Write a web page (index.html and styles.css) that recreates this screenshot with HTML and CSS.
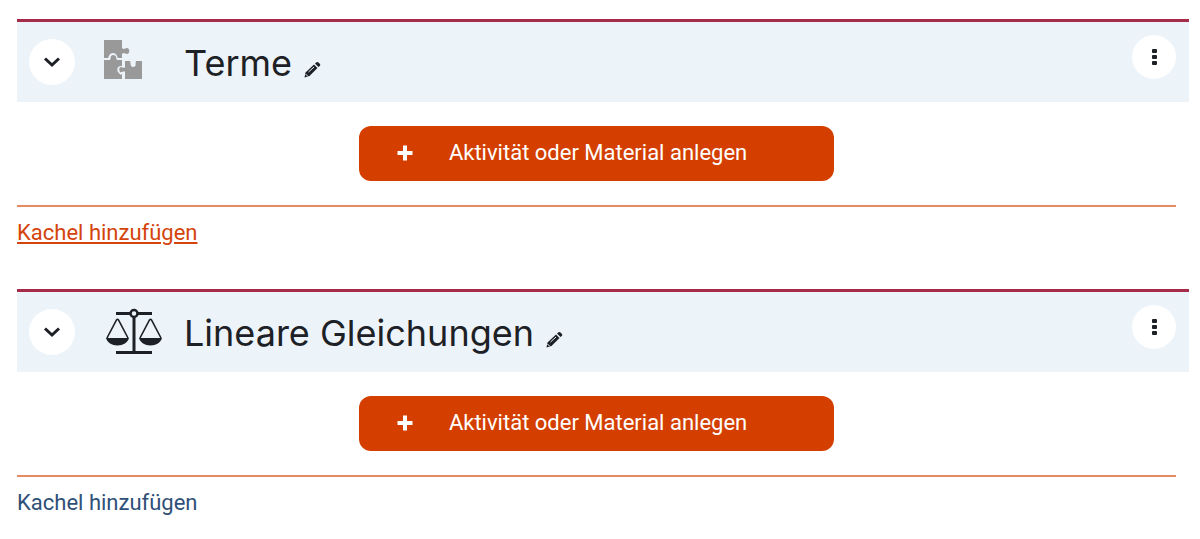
FILE: index.html
```
<!DOCTYPE html>
<html lang="de">
<head>
  <meta charset="UTF-8">
  <meta name="viewport" content="width=device-width, initial-scale=1.0">
  <title>Kurs bearbeiten</title>
  <link rel="stylesheet" href="styles.css">
</head>
<body>
  <main class="course">
    <section class="tile">
      <header class="tile-header">
        <button type="button" class="round-button" aria-label="Terme einklappen">
          <svg class="chevron" viewBox="0 0 18 12"><path d="M2 2.5 L9 9 L16 2.5" /></svg>
        </button>
        <svg class="tile-icon" viewBox="0 0 58 48" aria-hidden="true">
          <g fill="#999">
            <path d="M0 2 H18 V10 C20 12 21 10 23 10 C26 10 26 16 23 16 C21 16 20 14 18 16 V20 H14 C13 19 13 15 9 15 C5 15 5 19 4 20 H0 Z" />
            <path d="M0 22 H6 C7 21 6 17 9 17 C13 17 12 21 13 22 H18 V28 C13 27 12 33 15 35 C16 37 17 37 18 36 V41 H0 Z" />
            <path d="M21 23 H26 C27 25 26 29 29 29 C33 29 31 25 32 23 H38 V41 H21 V34 C20 32 18 35 16 34 C15 32 15 29 17 29 C19 29 20 31 21 29 Z" />
          </g>
        </svg>
        <h2 class="tile-title">Terme</h2>
        <button type="button" class="edit-button" aria-label="Titel bearbeiten">
          <svg viewBox="0 0 17 17"><path d="M0.5 16.5 L1.5 11.5 L10 3.5 L13.5 7 L5.5 15 Z M11 2.5 L12.5 1.2 Q13.5 0.5 14.5 1.5 L16 3 Q16.6 4 16 4.8 L14.5 6 Z" /><path class="pencil-light" d="M1.5 13 L4 15.5 M4.5 11 L10 6" /></svg>
        </button>
        <button type="button" class="round-button menu-button" aria-label="Aktionen">
          <svg class="dots" viewBox="0 0 5 16"><rect x="0" y="0" width="5" height="4" rx="1" /><rect x="0" y="6" width="5" height="4" rx="1" /><rect x="0" y="12" width="5" height="4" rx="1" /></svg>
        </button>
      </header>
      <div class="tile-body">
        <button type="button" class="add-activity">
          <svg class="plus" viewBox="0 0 16 16"><path d="M8 0.5 V15.5 M0.5 8 H15.5" /></svg>
          Aktivität oder Material anlegen
        </button>
        <div class="add-tile">
          <a href="#" class="add-link active">Kachel hinzufügen</a>
        </div>
      </div>
    </section>

    <section class="tile">
      <header class="tile-header">
        <button type="button" class="round-button" aria-label="Lineare Gleichungen einklappen">
          <svg class="chevron" viewBox="0 0 18 12"><path d="M2 2.5 L9 9 L16 2.5" /></svg>
        </button>
        <svg class="tile-icon" viewBox="0 0 58 48" aria-hidden="true">
          <g fill="none" stroke="#1d2125">
            <path stroke-width="3" d="M12 5.5 H48 M12 44.5 H48 M30 8 V44" />
            <path stroke-width="1.6" d="M3 30 L12.5 12 Q13.5 10.5 14.5 12 L24 30 M36 30 L45.5 12 Q46.5 10.5 47.5 12 L57 30" />
          </g>
          <path fill="#1d2125" d="M2 30 H25 C24 34.5 19 37.5 13.5 37.5 C8 37.5 3 34.5 2 30 Z M35 30 H58 C57 34.5 52 37.5 46.5 37.5 C41 37.5 36 34.5 35 30 Z" />
          <circle cx="30" cy="5.5" r="3.5" fill="#ecf3f9" stroke="#1d2125" stroke-width="2.5" />
        </svg>
        <h2 class="tile-title">Lineare Gleichungen</h2>
        <button type="button" class="edit-button" aria-label="Titel bearbeiten">
          <svg viewBox="0 0 17 17"><path d="M0.5 16.5 L1.5 11.5 L10 3.5 L13.5 7 L5.5 15 Z M11 2.5 L12.5 1.2 Q13.5 0.5 14.5 1.5 L16 3 Q16.6 4 16 4.8 L14.5 6 Z" /><path class="pencil-light" d="M1.5 13 L4 15.5 M4.5 11 L10 6" /></svg>
        </button>
        <button type="button" class="round-button menu-button" aria-label="Aktionen">
          <svg class="dots" viewBox="0 0 5 16"><rect x="0" y="0" width="5" height="4" rx="1" /><rect x="0" y="6" width="5" height="4" rx="1" /><rect x="0" y="12" width="5" height="4" rx="1" /></svg>
        </button>
      </header>
      <div class="tile-body">
        <button type="button" class="add-activity">
          <svg class="plus" viewBox="0 0 16 16"><path d="M8 0.5 V15.5 M0.5 8 H15.5" /></svg>
          Aktivität oder Material anlegen
        </button>
        <div class="add-tile">
          <a href="#" class="add-link">Kachel hinzufügen</a>
        </div>
      </div>
    </section>
  </main>
</body>
</html>
```
FILE: styles.css
```
* {
  box-sizing: border-box;
}
body {
  margin: 0;
  background-color: #fff;
  color: #1d2125;
  font-family: Roboto, sans-serif;
  font-size: 22px;
  line-height: 30px;
}
button {
  border: none;
  padding: 0;
  font: inherit;
  color: inherit;
  cursor: pointer;
}
svg {
  display: block;
}
.course {
  display: flex;
  flex-direction: column;
  gap: 41px;
  padding: 19px 11px 0 17px;
}
.tile-header {
  display: flex;
  align-items: center;
  height: 83px;
  padding: 0 13px 0 12px;
  border-top: 3px solid #a42c48;
  background-color: #ecf3f9;
}
.round-button {
  display: flex;
  align-items: center;
  justify-content: center;
  flex-shrink: 0;
  width: 46px;
  height: 46px;
  border-radius: 50%;
  background-color: #fff;
}
.chevron {
  width: 18px;
  height: 12px;
  fill: none;
  stroke: #1d2125;
  stroke-width: 3;
}
.tile-icon {
  flex-shrink: 0;
  width: 58px;
  height: 48px;
  margin: 0 22px 0 29px;
}
.tile-title {
  margin: 2px 0 0;
  font-family: Inter, sans-serif;
  font-size: 36px;
  font-weight: 400;
  line-height: 48px;
}
.edit-button {
  margin: 14px 0 0 12px;
  background: none;
}
.edit-button svg {
  width: 17px;
  height: 17px;
  fill: #1d2125;
}
.edit-button .pencil-light {
  fill: none;
  stroke: #ecf3f9;
}
.menu-button {
  align-self: flex-start;
  width: 44px;
  height: 44px;
  margin: 13px 0 0 auto;
}
.dots {
  width: 5px;
  height: 16px;
  fill: #1d2125;
}
.tile-body {
  margin-right: 13px;
  padding-top: 24px;
}
.add-activity {
  display: flex;
  align-items: center;
  gap: 36px;
  width: 41%;
  height: 55px;
  margin: 0 auto 24px;
  padding: 0 0 2px 38px;
  border-radius: 12px;
  background-color: #d43f00;
  color: #fff;
  white-space: nowrap;
}
.plus {
  width: 16px;
  height: 16px;
  stroke: #fff;
  stroke-width: 4;
}
.add-tile {
  padding-top: 11px;
  border-top: 2px solid #e98b62;
}
.add-link {
  color: #2f5078;
  text-decoration: none;
}
.add-link.active {
  color: #d4440c;
  text-decoration: underline;
}
```
